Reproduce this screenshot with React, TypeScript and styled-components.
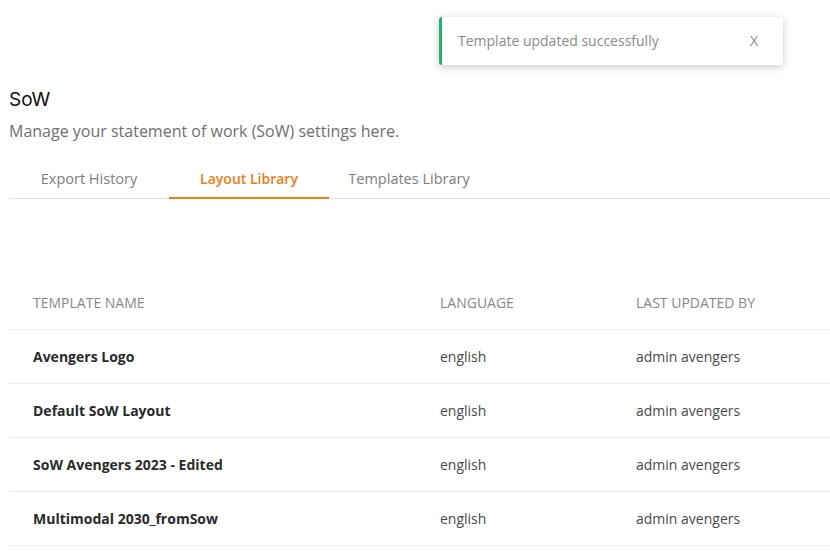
import React from "react";
import styled, { createGlobalStyle } from "styled-components";

const Global = createGlobalStyle`
  html, body { margin: 0; padding: 0; background: #ffffff; }
  body { font-family: "Open Sans", "Noto Sans", sans-serif; color: #333; }
`;

const Page = styled.div`
  position: relative;
  padding: 88px 0 0 9px;
  width: 830px;
  box-sizing: border-box;
`;

const Toast = styled.div`
  position: absolute;
  top: 17px;
  left: 439px;
  width: 344px;
  height: 48px;
  box-sizing: border-box;
  background: #fff;
  border-left: 3px solid #1fb46e;
  border-radius: 3px;
  box-shadow: 0 2px 8px rgba(0, 0, 0, 0.22);
  display: flex;
  align-items: center;
  justify-content: space-between;
  padding: 0 25px 1px 16px;
  font-size: 14px;
  color: #8a8a8a;
`;

const Close = styled.span`
  font-size: 14px;
  color: #8a8a8a;
`;

const Title = styled.h1`
  margin: 0;
  font-family: "Inter", "Noto Sans", sans-serif;
  font-weight: 400;
  font-size: 19px;
  line-height: 24px;
  color: #111;
`;

const Subtitle = styled.p`
  margin: 8px 0 0;
  font-size: 16px;
  line-height: 22px;
  color: #6f6f6f;
`;

const Tabs = styled.div`
  display: flex;
  margin-top: 18px;
  border-bottom: 1px solid #e2e2e2;
`;

const Tab = styled.div<{ $active?: boolean }>`
  width: 160px;
  text-align: center;
  font-size: ${(p) => (p.$active ? "14px" : "14.5px")};
  line-height: 20px;
  padding: 9px 0 8px;
  color: ${(p) => (p.$active ? "#f07c14" : "#7d7d7d")};
  font-weight: ${(p) => (p.$active ? 600 : 400)};
  border-bottom: 2px solid ${(p) => (p.$active ? "#f07c14" : "transparent")};
  margin-bottom: -1px;
`;

const Table = styled.div`
  margin-top: 77px;
`;

const Row = styled.div`
  display: grid;
  grid-template-columns: 407px 196px 1fr;
  align-items: center;
  height: 53px;
  padding-left: 24px;
  border-bottom: 1px solid #ececec;
`;

const HeadCell = styled.div`
  font-size: 14px;
  font-weight: 400;
  color: #888888;
  text-transform: uppercase;
  letter-spacing: 0;
`;

const NameCell = styled.div`
  font-size: 14px;
  font-weight: 700;
  color: #2a2a2a;
`;

const Cell = styled.div`
  font-size: 14px;
  color: #4a4a4a;
`;

const rows = [
  ["Avengers Logo", "english", "admin avengers"],
  ["Default SoW Layout", "english", "admin avengers"],
  ["SoW Avengers 2023 - Edited", "english", "admin avengers"],
  ["Multimodal 2030_fromSow", "english", "admin avengers"],
];

export default function App() {
  return (
    <Page>
      <Global />
      <Toast>
        <span>Template updated successfully</span>
        <Close>X</Close>
      </Toast>
      <Title>SoW</Title>
      <Subtitle>Manage your statement of work (SoW) settings here.</Subtitle>
      <Tabs>
        <Tab>Export History</Tab>
        <Tab $active>Layout Library</Tab>
        <Tab>Templates Library</Tab>
      </Tabs>
      <Table>
        <Row>
          <HeadCell>Template Name</HeadCell>
          <HeadCell>Language</HeadCell>
          <HeadCell>Last Updated By</HeadCell>
        </Row>
        {rows.map((r) => (
          <Row key={r[0]}>
            <NameCell>{r[0]}</NameCell>
            <Cell>{r[1]}</Cell>
            <Cell>{r[2]}</Cell>
          </Row>
        ))}
      </Table>
    </Page>
  );
}
